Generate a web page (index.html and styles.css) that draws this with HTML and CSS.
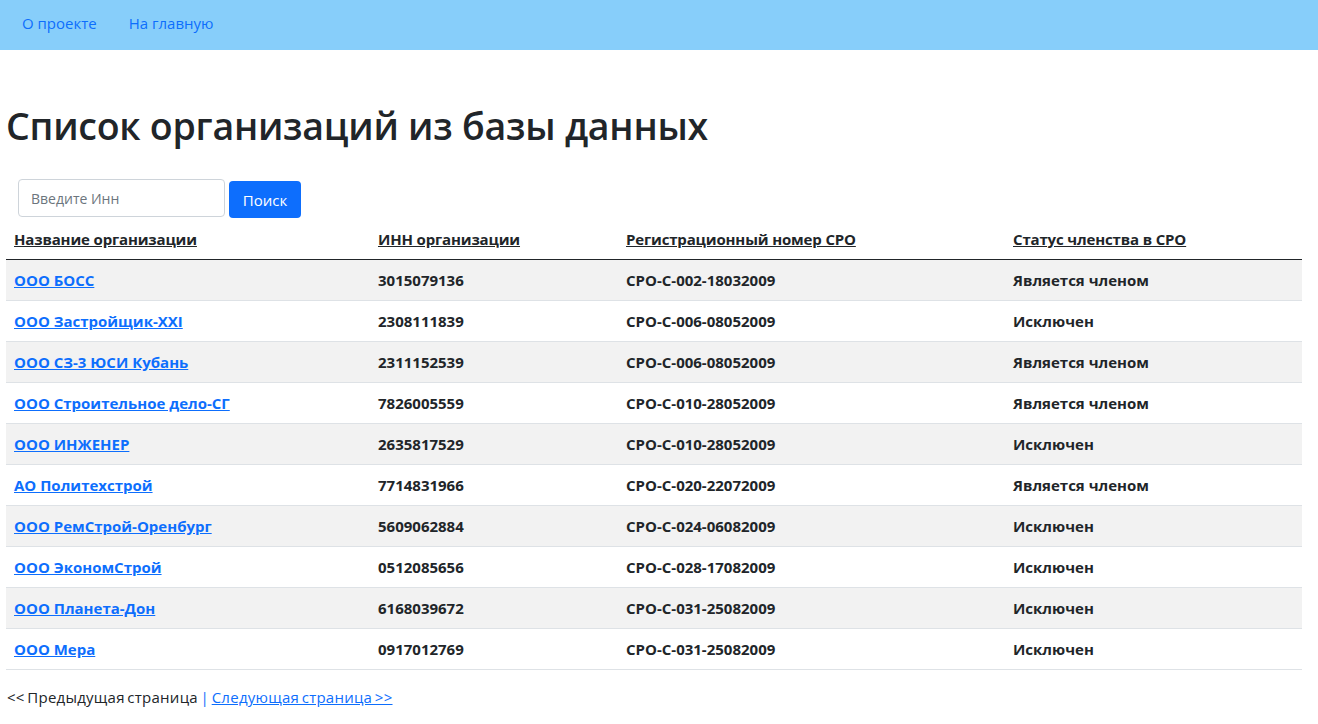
FILE: index.html
```html
<!DOCTYPE html>
<html lang="ru">
<head>
<meta charset="utf-8">
<title>Список организаций</title>
<link rel="stylesheet" href="styles.css">
</head>
<body>
<nav class="topnav">
  <a class="nav-link" href="#">О проекте</a>
  <a class="nav-link" href="#">На главную</a>
</nav>
<main class="content">
  <h1 class="title">Список организаций из базы данных</h1>
  <form class="search">
    <input class="search-input" type="text" placeholder="Введите Инн">
    <button class="search-btn" type="button">Поиск</button>
  </form>
  <table class="orgs">
    <colgroup>
      <col class="c1"><col class="c2"><col class="c3"><col class="c4">
    </colgroup>
    <thead>
      <tr>
        <th><a href="#">Название организации</a></th>
        <th><a href="#">ИНН организации</a></th>
        <th><a href="#">Регистрационный номер СРО</a></th>
        <th><a href="#">Статус членства в СРО</a></th>
      </tr>
    </thead>
    <tbody>
      <tr><td><a href="#">ООО БОСС</a></td><td>3015079136</td><td>СРО-С-002-18032009</td><td>Является членом</td></tr>
      <tr><td><a href="#">ООО Застройщик-XXI</a></td><td>2308111839</td><td>СРО-С-006-08052009</td><td>Исключен</td></tr>
      <tr><td><a href="#">ООО СЗ-3 ЮСИ Кубань</a></td><td>2311152539</td><td>СРО-С-006-08052009</td><td>Является членом</td></tr>
      <tr><td><a href="#">ООО Строительное дело-СГ</a></td><td>7826005559</td><td>СРО-С-010-28052009</td><td>Является членом</td></tr>
      <tr><td><a href="#">ООО ИНЖЕНЕР</a></td><td>2635817529</td><td>СРО-С-010-28052009</td><td>Исключен</td></tr>
      <tr><td><a href="#">АО Политехстрой</a></td><td>7714831966</td><td>СРО-С-020-22072009</td><td>Является членом</td></tr>
      <tr><td><a href="#">ООО РемСтрой-Оренбург</a></td><td>5609062884</td><td>СРО-С-024-06082009</td><td>Исключен</td></tr>
      <tr><td><a href="#">ООО ЭкономСтрой</a></td><td>0512085656</td><td>СРО-С-028-17082009</td><td>Исключен</td></tr>
      <tr><td><a href="#">ООО Планета-Дон</a></td><td>6168039672</td><td>СРО-С-031-25082009</td><td>Исключен</td></tr>
      <tr><td><a href="#">ООО Мера</a></td><td>0917012769</td><td>СРО-С-031-25082009</td><td>Исключен</td></tr>
    </tbody>
  </table>
  <p class="pager">&lt;&lt; Предыдущая страница <span class="sep">|</span> <a href="#">Следующая страница &gt;&gt;</a></p>
</main>
</body>
</html>
```
FILE: styles.css
```css
* { box-sizing: border-box; }
html, body {
  margin: 0;
  padding: 0;
  background: #fff;
  color: #212529;
  font-family: "Open Sans", "Noto Sans", sans-serif;
  font-size: 16px;
  line-height: 1.5;
}
.topnav {
  height: 50px;
  background: #87cefa;
  display: flex;
  align-items: center;
  padding: 0 0 3px 6px;
}
.nav-link {
  color: #0d6efd;
  text-decoration: none;
  padding: 8px 16px;
  font-size: 15px;
}
.content {
  padding: 0 16px 0 6px;
}
.title {
  margin: 52px 0 8px;
  font-size: 37.5px;
  font-weight: 600;
  line-height: 48px;
  letter-spacing: -0.25px;
}
.search {
  display: flex;
  align-items: flex-start;
  gap: 4px;
  margin: 29px 0 0 12px;
  height: 40px;
}
.search-input {
  width: 207px;
  height: 38px;
  border: 1px solid #ced4da;
  border-radius: 4px;
  padding: 6px 12px;
  font-family: inherit;
  font-size: 14px;
  color: #212529;
}
.search-input::placeholder { color: #6c757d; }
.search-btn {
  margin-top: 2px;
  width: 72px;
  height: 37px;
  background: #0d6efd;
  color: #fff;
  border: 0;
  border-radius: 4px;
  font-family: inherit;
  font-size: 15px;
  padding: 0;
}
.orgs {
  width: 100%;
  border-collapse: collapse;
  font-size: 15px;
}
.c1 { width: 364px; }
.c2 { width: 248px; }
.c3 { width: 387px; }
.orgs th, .orgs td {
  text-align: left;
  padding: 8px;
  line-height: 24px;
  font-weight: 700;
  border-bottom: 1px solid #dee2e6;
  vertical-align: middle;
}
.orgs th { letter-spacing: -0.15px; }
.orgs thead th {
  border-bottom: 1px solid #212529;
}
.orgs th a {
  color: #212529;
  text-decoration: underline;
}
.orgs td a {
  color: #0d6efd;
  text-decoration: underline;
}
.orgs tbody tr:nth-child(odd) td {
  background: #f2f2f2;
}
.pager {
  margin: 16px 0 0 1px;
  font-size: 15px;
  letter-spacing: 0.25px;
  word-spacing: -1.5px;
}
.pager .sep { color: #0d6efd; }
.pager a { color: #0d6efd; text-decoration: underline; }
```
